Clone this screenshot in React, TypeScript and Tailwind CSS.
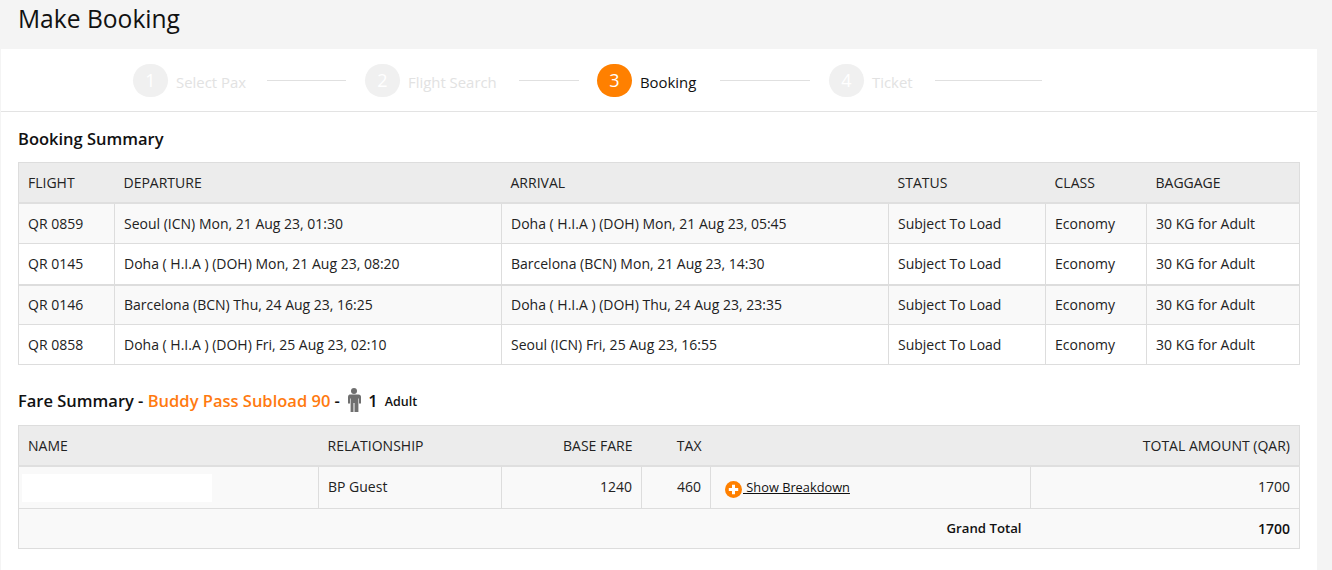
import { Fragment } from "react";

const steps = [
	{ n: 1, label: "Select Pax", lineW: "w-[79px]", textW: "w-[69px]", gap: "ml-[22px] mr-[19px]" },
	{ n: 2, label: "Flight Search", lineW: "w-[60px]", textW: "w-[89px]", gap: "ml-[22px] mr-[18px]" },
	{ n: 3, label: "Booking", lineW: "w-[90px]", textW: "w-[57px]", gap: "ml-[23px] mr-[19px]", active: true },
	{ n: 4, label: "Ticket", lineW: "w-[107px]", textW: "w-[41px]", gap: "ml-[22px]" },
];

const flights = [
	["QR 0859", "Seoul (ICN) Mon, 21 Aug 23, 01:30", "Doha ( H.I.A ) (DOH) Mon, 21 Aug 23, 05:45"],
	["QR 0145", "Doha ( H.I.A ) (DOH) Mon, 21 Aug 23, 08:20", "Barcelona (BCN) Mon, 21 Aug 23, 14:30"],
	["QR 0146", "Barcelona (BCN) Thu, 24 Aug 23, 16:25", "Doha ( H.I.A ) (DOH) Thu, 24 Aug 23, 23:35"],
	["QR 0858", "Doha ( H.I.A ) (DOH) Fri, 25 Aug 23, 02:10", "Seoul (ICN) Fri, 25 Aug 23, 16:55"],
];

const th = "h-[40px] px-[9px] text-left font-normal border-b-2 border-[#dfdfdf]";
const td = "px-[9px] border border-[#dddddd]";

function Stepper() {
	return (
		<div className="flex items-center h-[63px] pl-[132px] border-b border-[#e3e3e3]">
			{steps.map((s) => (
				<Fragment key={s.n}>
					<div
						className={`flex items-center justify-center w-[35px] h-[33px] rounded-full text-[18px] text-white ${
							s.active ? "bg-[#ff8000]" : "bg-[#f0f0f0]"
						}`}
					>
						{s.n}
					</div>
					<span
						className={`ml-2 pt-[4px] whitespace-nowrap text-[14.9px] ${s.textW} ${
							s.active ? "text-[#111]" : "text-[#e2e2e2]"
						}`}
					>
						{s.label}
					</span>
					<div className={`h-px mt-[1px] bg-[#e0e0e0] ${s.lineW} ${s.gap}`} />
				</Fragment>
			))}
		</div>
	);
}

function BookingTable() {
	return (
		<table className="w-[1281px] table-fixed border-collapse border border-[#dddddd] text-[14px] text-[#222]">
			<colgroup>
				<col className="w-[96px]" />
				<col className="w-[387px]" />
				<col className="w-[387px]" />
				<col className="w-[157px]" />
				<col className="w-[101px]" />
				<col className="w-[153px]" />
			</colgroup>
			<thead className="bg-[#ececec]">
				<tr>
					{["FLIGHT", "DEPARTURE", "ARRIVAL", "STATUS", "CLASS", "BAGGAGE"].map((h) => (
						<th key={h} className={th}>
							{h}
						</th>
					))}
				</tr>
			</thead>
			<tbody>
				{flights.map((f, i) => (
					<tr
						key={f[0]}
						className={`${i % 2 === 0 ? "bg-[#f9f9f9]" : "bg-white"} ${
							i === 1 ? "border-b-2 border-[#dddddd] h-[41px]" : i === 0 ? "h-[41px]" : "h-[40px]"
						}`}
					>
						{f.map((c) => (
							<td key={c} className={td}>
								{c}
							</td>
						))}
						<td className={td}>Subject To Load</td>
						<td className={td}>Economy</td>
						<td className={td}>30 KG for Adult</td>
					</tr>
				))}
			</tbody>
		</table>
	);
}

function FareTable() {
	return (
		<table className="w-[1281px] table-fixed border-collapse border border-[#dddddd] text-[14px] text-[#222]">
			<colgroup>
				<col className="w-[300px]" />
				<col className="w-[183px]" />
				<col className="w-[140px]" />
				<col className="w-[69px]" />
				<col className="w-[320px]" />
				<col className="w-[269px]" />
			</colgroup>
			<thead className="bg-[#ececec]">
				<tr>
					<th className={th}>NAME</th>
					<th className={th}>RELATIONSHIP</th>
					<th className={th} style={{ textAlign: "right" }}>
						BASE FARE
					</th>
					<th className={th} style={{ textAlign: "right" }}>
						TAX
					</th>
					<th className={th} colSpan={2} style={{ textAlign: "right" }}>
						TOTAL AMOUNT (QAR)
					</th>
				</tr>
			</thead>
			<tbody className="bg-[#f9f9f9]">
				<tr className="h-[43px]">
					<td className={`${td} !px-[3px]`}>
						<div className="w-[190px] h-[28px] mt-[1px] bg-white" />
					</td>
					<td className={`${td} pb-[2px]`}>BP Guest</td>
					<td className={`${td} pb-[2px] text-right`}>1240</td>
					<td className={`${td} pb-[2px] text-right`}>460</td>
					<td className={`${td} !pl-[14px]`}>
						<a className="flex items-center underline text-[12.8px] text-[#111]">
							<svg viewBox="0 0 17 17" className="w-[17px] h-[17px] mt-[5px] mr-px shrink-0">
								<circle cx="8.5" cy="8.5" r="8.5" fill="#ff8000" />
								<path d="M8.5 3.8v9.4M3.8 8.5h9.4" stroke="#fff" strokeWidth="3" />
							</svg>
							<span className="whitespace-pre"> Show Breakdown</span>
						</a>
					</td>
					<td className={`${td} pb-[2px] text-right`}>1700</td>
				</tr>
				<tr className="h-[40px] font-semibold text-[#111]">
					<td className={`${td} text-right !text-[13.2px] !border-r-0`} colSpan={5}>
						Grand Total
					</td>
					<td className={`${td} text-right !border-l-0`}>1700</td>
				</tr>
			</tbody>
		</table>
	);
}

export default function App() {
	return (
		<div className="w-[1332px] h-[570px] overflow-hidden bg-[#f4f4f4] font-['Open_Sans','Noto_Sans',sans-serif]">
			<div className="h-[49px] pl-[18px] text-[24.6px] leading-[38px] text-[#111]">Make Booking</div>
			<div className="ml-[1px] w-[1316px] h-[521px] bg-white">
				<Stepper />
				<div className="pl-[17px]">
					<h2 className="h-[50px] pt-[15px] text-[16.5px] leading-[24px] font-semibold text-[#111]">Booking Summary</h2>
					<BookingTable />
					<h2 className="flex items-center h-[60px] pt-[13px] text-[16.5px] font-semibold text-[#111]">
						Fare Summary -&nbsp;<span className="text-[#ff7a0f]">Buddy Pass Subload 90</span>&nbsp;-&nbsp;
						<svg viewBox="0 0 14 24" className="w-[14px] h-[24px] ml-[3px] mb-[3px] fill-[#6f6f6f]">
							<circle cx="7" cy="3" r="3" />
							<path d="M2.5 6.5h9a2.5 2.5 0 0 1 2.5 2.5v6.5h-2v-5h-.6V24H7.5v-9h-1v9H3.6V10.5H3v5H1V9a2.5 2.5 0 0 1 1.5-2.5z" />
						</svg>
						<span className="ml-[7px]">1</span>
						<span className="ml-[7px] mt-[2px] text-[12.5px]">Adult</span>
					</h2>
					<FareTable />
				</div>
			</div>
		</div>
	);
}
